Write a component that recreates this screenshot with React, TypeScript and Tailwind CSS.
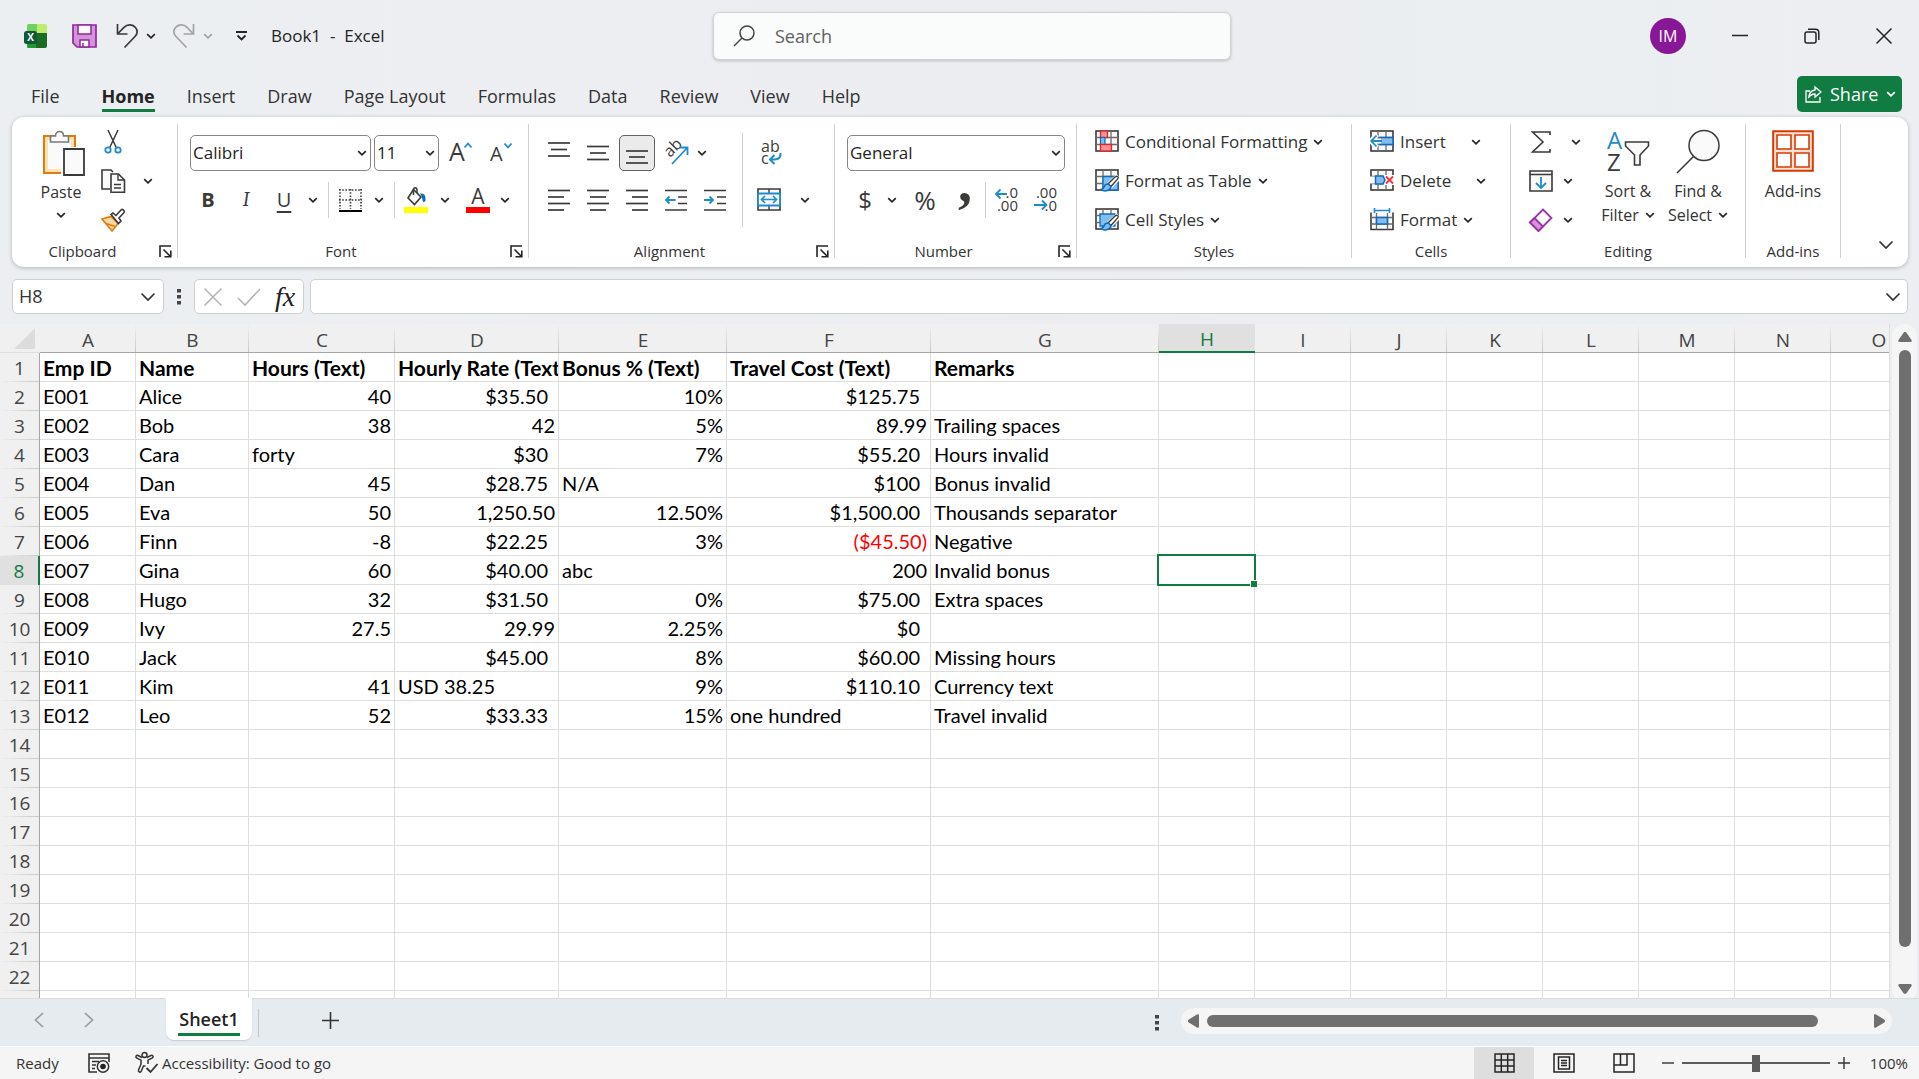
import type { ReactNode } from 'react';
import clsx from 'clsx';

const INK = '#3b3a39';
const BLUE = '#1e8bcd';

type Cell = { text: string; align?: 'right'; pad?: boolean; red?: boolean };

const columns = [
  { name: 'A', width: 96 },
  { name: 'B', width: 113 },
  { name: 'C', width: 146 },
  { name: 'D', width: 164 },
  { name: 'E', width: 168 },
  { name: 'F', width: 204 },
  { name: 'G', width: 228 },
  { name: 'H', width: 96 },
  { name: 'I', width: 96 },
  { name: 'J', width: 96 },
  { name: 'K', width: 96 },
  { name: 'L', width: 96 },
  { name: 'M', width: 96 },
  { name: 'N', width: 96 },
  { name: 'O', width: 96 },
];

const ROW_HEADER = 40;
const tableWidth = columns.reduce((sum, col) => sum + col.width, ROW_HEADER);

const l = (text: string): Cell => ({ text });
const r = (text: string): Cell => ({ text, align: 'right' });
// currency formats leave room for a closing bracket
const c = (text: string): Cell => ({ text, align: 'right', pad: true });

const data: Cell[][] = [
  ['Emp ID', 'Name', 'Hours (Text)', 'Hourly Rate (Text)', 'Bonus % (Text)', 'Travel Cost (Text)', 'Remarks'].map(l),
  [l('E001'), l('Alice'), r('40'), c('$35.50'), r('10%'), c('$125.75'), l('')],
  [l('E002'), l('Bob'), r('38'), r('42'), r('5%'), r('89.99'), l('Trailing spaces')],
  [l('E003'), l('Cara'), l('forty'), c('$30'), r('7%'), c('$55.20'), l('Hours invalid')],
  [l('E004'), l('Dan'), r('45'), c('$28.75'), l('N/A'), c('$100'), l('Bonus invalid')],
  [l('E005'), l('Eva'), r('50'), r('1,250.50'), r('12.50%'), c('$1,500.00'), l('Thousands separator')],
  [l('E006'), l('Finn'), r('-8'), c('$22.25'), r('3%'), { text: '($45.50)', align: 'right', red: true }, l('Negative')],
  [l('E007'), l('Gina'), r('60'), c('$40.00'), l('abc'), r('200'), l('Invalid bonus')],
  [l('E008'), l('Hugo'), r('32'), c('$31.50'), r('0%'), c('$75.00'), l('Extra spaces')],
  [l('E009'), l('Ivy'), r('27.5'), r('29.99'), r('2.25%'), c('$0'), l('')],
  [l('E010'), l('Jack'), l(''), c('$45.00'), r('8%'), c('$60.00'), l('Missing hours')],
  [l('E011'), l('Kim'), r('41'), l('USD 38.25'), r('9%'), c('$110.10'), l('Currency text')],
  [l('E012'), l('Leo'), r('52'), c('$33.33'), r('15%'), l('one hundred'), l('Travel invalid')],
];

const rowNumbers = Array.from({ length: 23 }, (_, i) => i + 1);
const tabs = ['File', 'Home', 'Insert', 'Draw', 'Page Layout', 'Formulas', 'Data', 'Review', 'View', 'Help'];

function Icon({ w, h, className, children }: { w: number; h: number; className?: string; children: ReactNode }) {
  return (
    <svg width={w} height={h} viewBox={`0 0 ${w} ${h}`} fill="none" className={clsx('block shrink-0 overflow-visible', className)} aria-hidden="true">
      {children}
    </svg>
  );
}

function Chevron({ color = '#242424' }: { color?: string }) {
  return (
    <Icon w={10} h={6}>
      <path d="M1.2 1.2 5 4.8 8.8 1.2" stroke={color} strokeWidth="1.7" />
    </Icon>
  );
}

function WideChevron() {
  return (
    <Icon w={16} h={10}>
      <path d="M1.5 1.5 8 8l6.5-6.5" stroke="#333" strokeWidth="1.7" />
    </Icon>
  );
}

function Tool({ label, className, children }: { label: string; className?: string; children: ReactNode }) {
  return (
    <button type="button" aria-label={label} className={clsx('flex h-9 w-9 shrink-0 items-center justify-center rounded-[5px]', className)}>
      {children}
    </button>
  );
}

function Drop({ label, className }: { label: string; className?: string }) {
  return (
    <button type="button" aria-label={label} className={clsx('flex h-9 w-[18px] shrink-0 items-center justify-center', className)}>
      <Chevron />
    </button>
  );
}

function Group({ label, width, launcher, children }: { label: string; width: string; launcher?: boolean; children: ReactNode }) {
  return (
    <section aria-label={label} className={clsx('flex shrink-0 flex-col border-r border-[#d1d1d1]', width)}>
      <div className="min-h-0 flex-1">{children}</div>
      <div className="flex h-[14px] items-end">
        <span className="flex-1 text-center text-[15px] leading-[14px] text-[#333]">{label}</span>
        {launcher && (
          <button type="button" aria-label={`${label} settings`} className="w-6 pl-1.5">
            <Icon w={13} h={13}>
              <path d="M1 12V1h11M4.5 4.5l7 7M11.8 5.5v6.3H5.5" stroke="#242424" strokeWidth="1.6" />
            </Icon>
          </button>
        )}
      </div>
    </section>
  );
}

function Divider({ className }: { className?: string }) {
  return <span className={clsx('h-9 w-px shrink-0 bg-[#d1d1d1]', className)} />;
}

function Select({ label, value, className }: { label: string; value: string; className: string }) {
  return (
    <div className={clsx('relative h-9 shrink-0', className)}>
      <select aria-label={label} className="h-full w-full appearance-none rounded-[5px] border border-[#868686] bg-white pl-0.5 text-[17px] text-[#242424]">
        <option>{value}</option>
      </select>
      <span className="pointer-events-none absolute top-[15px] right-1">
        <Chevron />
      </span>
    </div>
  );
}

// horizontal rules of a text-alignment icon, as [x1, x2, y]
function Lines({ rows }: { rows: [number, number, number][] }) {
  return (
    <Icon w={22} h={22}>
      {rows.map(([x1, x2, y]) => (
        <path key={y} d={`M${x1} ${y}H${x2}`} stroke={INK} strokeWidth="1.7" />
      ))}
    </Icon>
  );
}

function GridLines() {
  return (
    <>
      <rect x="1" y="1" width="22" height="20" fill="#fafafa" stroke={INK} strokeWidth="1.6" />
      <path d="M1 7.5h22M1 14.5h22M8 1v20M16 1v20" stroke="#6b6b6b" strokeWidth="1.3" />
    </>
  );
}

function Brush() {
  return (
    <>
      <path d="M23 6.5 14 15l-3.5 4M24 9l-9 9" stroke="#fff" strokeWidth="4" />
      <path d="M22.5 7.5c1 .8.8 1.7 0 2.6L16 17.5l-3-2.5 7-7c.9-.8 1.7-1.2 2.5-.5Z" fill="#fff" stroke={INK} strokeWidth="1.4" />
      <path d="M13 15c-2.5 0-3.5 1.2-4 3-.3 1.3-1.3 2.2-3 2.5 2.5 2 8.5 2.5 10-3Z" fill="#83bdec" stroke="#0f6cbd" strokeWidth="1.5" />
    </>
  );
}

const styleItems = [
  {
    name: 'Conditional Formatting',
    icon: (
      <>
        <GridLines />
        <rect x="5.5" y="1" width="7" height="6.5" fill="#ff8f98" stroke="#d92b2b" strokeWidth="1.4" />
        <rect x="5.5" y="7.5" width="4.5" height="7" fill="#83bdec" stroke="#0f6cbd" strokeWidth="1.2" />
        <rect x="5.5" y="14.5" width="11" height="6.5" fill="#ff8f98" stroke="#d92b2b" strokeWidth="1.4" />
      </>
    ),
  },
  {
    name: 'Format as Table',
    icon: (
      <>
        <GridLines />
        <path d="M8 7.5h15V21H8z" fill="#83bdec" stroke="#0f6cbd" strokeWidth="1.3" />
        <Brush />
      </>
    ),
  },
  {
    name: 'Cell Styles',
    icon: (
      <>
        <GridLines />
        <path d="M5 6h15v12H5z" fill="#83bdec" stroke="#0f6cbd" strokeWidth="1.3" />
        <Brush />
      </>
    ),
  },
];

const cellItems = [
  {
    name: 'Insert',
    gap: 'ml-[25px]',
    icon: (
      <>
        <GridLines />
        <path d="M10 7.5h13v7H10z" fill="#83bdec" stroke="#0f6cbd" strokeWidth="1.5" />
        <path d="M0 11h11M7 4.5 1 11l6 6.5" stroke="#fff" strokeWidth="5" />
        <path d="M1.5 11H12M6.5 5.5 1.2 11l5.3 5.5" stroke={BLUE} strokeWidth="1.8" />
      </>
    ),
  },
  {
    name: 'Delete',
    gap: 'ml-[25px]',
    icon: (
      <>
        <GridLines />
        <path d="M0 7.5h5v7H0zM14 6h10v10H14z" fill="#fff" />
        <path d="M5.5 7H13l2 4-2 4H5.5z" fill="#83bdec" stroke="#0f6cbd" strokeWidth="1.5" />
        <path d="m16 7.5 7 7m0-7-7 7" stroke="#e8373e" strokeWidth="1.9" />
      </>
    ),
  },
  {
    name: 'Format',
    gap: 'ml-1.5',
    icon: (
      <>
        <path d="M1 4.5v17h22v-17" fill="#fafafa" stroke={INK} strokeWidth="1.6" />
        <path d="M1 9.5h22M1 16h22M6.5 5v16.5M17.5 5v16.5" stroke="#6b6b6b" strokeWidth="1.3" />
        <path d="M6.5 9.5h11V16h-11z" fill="#83bdec" stroke="#0f6cbd" strokeWidth="1.6" />
        <path d="M4.5 2.5h15M4.5 0v5M19.5 0v5" stroke={BLUE} strokeWidth="1.6" />
      </>
    ),
  },
];

function TitleBar() {
  return (
    <header className="flex h-[72px] shrink-0 items-center">
      <div className="flex w-[713px] shrink-0 items-center pl-6">
        <Icon w={24} h={24}>
          <path d="M5 0h11v9H3V2c0-1.2.8-2 2-2Z" fill="#6fd160" />
          <path d="M13 0h8c1.2 0 2 .8 2 2v7H13z" fill="#bdec6e" />
          <path d="M3 9h20v13c0 1.2-.8 2-2 2H5c-1.2 0-2-.8-2-2z" fill="#1b6b22" />
          <path d="M3 9h9v15H5c-1.2 0-2-.8-2-2z" fill="#219a33" />
          <rect y="7" width="13" height="13" rx="2.5" fill="#0e5a38" />
          <text x="6.5" y="17" textAnchor="middle" fontSize="10" fontWeight="700" fill="#fff">X</text>
        </Icon>
        <button type="button" aria-label="Save" className="ml-6">
          <Icon w={25} h={24}>
            <path d="M1 1h23v22H5l-4-4z" fill="#d693dc" stroke="#8e2a9b" strokeWidth="1.7" />
            <path d="M6 1h13v9H6zM8 16h9v7H8z" fill="#fafafa" stroke="#8e2a9b" strokeWidth="1.5" />
            <path d="M11 19v4" stroke="#8e2a9b" strokeWidth="1.5" />
          </Icon>
        </button>
        <button type="button" aria-label="Undo" className="ml-[19px]">
          <Icon w={23} h={24}>
            <path d="M1.5 0v10h10M2 9.5l6-6.2C11.5-.3 17 .3 19.5 3.5c2.3 3 1.8 6.5-.5 9L8.5 23.5" stroke={INK} strokeWidth="1.7" />
          </Icon>
        </button>
        <button type="button" aria-label="Undo history" className="ml-[7px]">
          <Chevron />
        </button>
        <button type="button" aria-label="Redo" className="ml-4">
          <Icon w={23} h={24}>
            <path d="M21.5 0v10h-10M21 9.5l-6-6.2C11.5-.3 6 .3 3.5 3.5c-2.3 3-1.8 6.5.5 9l10.5 11" stroke="#a3a3a3" strokeWidth="1.7" />
          </Icon>
        </button>
        <button type="button" aria-label="Redo history" className="ml-2">
          <Chevron color="#a3a3a3" />
        </button>
        <button type="button" aria-label="Customize Quick Access Toolbar" className="ml-[23px]">
          <Icon w={11} h={11}>
            <path d="M0 1h11M1.5 4.5l4 4 4-4" stroke="#242424" strokeWidth="1.8" />
          </Icon>
        </button>
        <h1 className="ml-6 text-[17px] whitespace-pre text-[#242424]">Book1  -  Excel</h1>
      </div>
      <label className="flex h-12 w-[518px] shrink-0 items-center rounded-md border border-[#d0d2d4] bg-[#fafbfb] pl-[19px] shadow-[0_1px_3px_rgba(0,0,0,0.2)]">
        <Icon w={22} h={22}>
          <circle cx="14" cy="8" r="7" stroke="#444" strokeWidth="1.5" />
          <path d="m9 13-8 8" stroke="#444" strokeWidth="1.5" />
        </Icon>
        <input aria-label="Search" placeholder="Search" className="ml-5 w-full bg-transparent text-[18px] outline-none placeholder:text-[#616161]" />
      </label>
      <div className="ml-auto flex items-center">
        <button type="button" aria-label="Account" className="flex h-9 w-9 items-center justify-center rounded-full bg-[#881798] text-[16px] text-white">
          IM
        </button>
        <button type="button" aria-label="Minimize" className="ml-[18px] flex h-12 w-[72px] items-center justify-center">
          <Icon w={16} h={16}>
            <path d="M0 7.5h16" stroke="#242424" strokeWidth="1.5" />
          </Icon>
        </button>
        <button type="button" aria-label="Restore" className="flex h-12 w-[72px] items-center justify-center">
          <Icon w={16} h={16}>
            <rect x="1" y="4" width="11" height="11" rx="2" stroke="#242424" strokeWidth="1.5" />
            <path d="M4 1.2h7.5c2 0 3.3 1.3 3.3 3.3V12" stroke="#242424" strokeWidth="1.5" />
          </Icon>
        </button>
        <button type="button" aria-label="Close" className="flex h-12 w-[71px] items-center justify-center">
          <Icon w={16} h={16}>
            <path d="m.5.5 15 15m0-15-15 15" stroke="#242424" strokeWidth="1.5" />
          </Icon>
        </button>
      </div>
    </header>
  );
}

function TabBar() {
  return (
    <nav className="flex h-[45px] shrink-0 items-start pl-4">
      {tabs.map((tab) => (
        <button
          key={tab}
          type="button"
          className={clsx('px-[15px] pt-[11px] text-[18px] leading-[26px] text-[#333]', tab === 'File' ? 'mr-3' : 'mr-0.5')}
        >
          {tab === 'Home' ? <span className="block border-b-[3px] border-[#107c41] font-bold text-[#242424]">{tab}</span> : tab}
        </button>
      ))}
      <button type="button" className="mt-1 mr-[17px] ml-auto flex h-9 w-[105px] items-center rounded-[5px] bg-[#107c41] pl-2 text-[18px] text-white">
        <Icon w={17} h={17}>
          <path d="M5 5H1v11h14v-5M10 1l6 5-6 5V8C7 8 5 9 3.5 12 4 7 6.5 4.5 10 4z" stroke="#fff" strokeWidth="1.3" />
        </Icon>
        <span className="ml-2">Share</span>
        <span className="ml-auto pr-1.5">
          <Chevron color="#fff" />
        </span>
      </button>
    </nav>
  );
}

function Clipboard() {
  return (
    <Group label="Clipboard" width="w-[166px]" launcher>
      <div className="flex">
        <button type="button" className="ml-[19px] flex w-[60px] flex-col items-center pt-1.5 text-[16px] leading-6 text-[#333]">
          <Icon w={42} h={46} className="ml-1.5">
            <path d="M1 6h31v37H1z" fill="#fce2ae" stroke="#e07b12" strokeWidth="2" />
            <path d="M5 10h23v29H5z" fill="#fafafa" />
            <path d="M7.5 6h5c0-6 8-6 8 0h5v6h-18z" fill="#fafafa" stroke="#7a7a7a" strokeWidth="1.6" />
            <path d="M18 17h24v29H18z" fill="#fff" />
            <path d="M21 19h20v26H21z" fill="#fafafa" stroke={INK} strokeWidth="1.8" />
          </Icon>
          <span className="mt-1">Paste</span>
          <span className="mt-2">
            <Chevron />
          </span>
        </button>
        <div className="ml-1 flex flex-col gap-[3px]">
          <Tool label="Cut">
            <Icon w={18} h={24}>
              <path d="m4 0 8.5 18M14 0 5.5 18" stroke={INK} strokeWidth="1.5" />
              <circle cx="4" cy="20" r="2.7" stroke={BLUE} strokeWidth="1.8" />
              <circle cx="14" cy="20" r="2.7" stroke={BLUE} strokeWidth="1.8" />
            </Icon>
          </Tool>
          <Tool label="Copy">
            <Icon w={24} h={24}>
              <path d="M9 20H1V1h9l2 2" fill="#fafafa" stroke={INK} strokeWidth="1.6" />
              <path d="M10 5h7.5l6 6v12.2H10z" fill="#fafafa" stroke={INK} strokeWidth="1.6" />
              <path d="M17 5v6h6M13 15.5h7M13 19h7" stroke={INK} strokeWidth="1.4" />
            </Icon>
          </Tool>
          <Tool label="Format Painter">
            <Icon w={24} h={24}>
              <path d="m1 11 9-2.5 7 7L11 23C8 19 4 15 1 11Z" fill="#fcd9a0" stroke="#e07b12" strokeWidth="1.6" />
              <path d="m5 15.5 9 3" stroke="#e07b12" strokeWidth="1.6" />
              <path d="m10 6.5 2-1.5 3 2.5L20 2c1.5-1.5 4.2.8 3 2.5L18 10l2 3-2.5 2.5z" fill="#fff" stroke={INK} strokeWidth="1.6" />
            </Icon>
          </Tool>
        </div>
        <Drop label="Copy options" className="mt-[39px] ml-2" />
      </div>
    </Group>
  );
}

function FontGroup() {
  return (
    <Group label="Font" width="w-[351px]" launcher>
      <div className="flex flex-col gap-[11px] pt-[11px] pl-3 text-[20px] text-[#3b3a39]">
        <div className="flex">
          <Select label="Font name" value="Calibri" className="w-[181px]" />
          <Select label="Font size" value="11" className="ml-[3px] w-[65px]" />
          <Tool label="Increase font size" className="ml-1">
            <Icon w={24} h={24}>
              <text x="0" y="20" fontSize="25" fill={INK}>A</text>
              <path d="m15.5 6.5 3.5-4 3.5 4" stroke={BLUE} strokeWidth="1.8" />
            </Icon>
          </Tool>
          <Tool label="Decrease font size" className="ml-1">
            <Icon w={24} h={24}>
              <text x="1" y="20" fontSize="20" fill={INK}>A</text>
              <path d="m15.5 2.5 3.5 4 3.5-4" stroke={BLUE} strokeWidth="1.8" />
            </Icon>
          </Tool>
        </div>
        <div className="flex">
          <Tool label="Bold" className="font-bold">B</Tool>
          <Tool label="Italic" className="ml-0.5 font-serif italic">I</Tool>
          <Tool label="Underline" className="ml-0.5 underline underline-offset-4">U</Tool>
          <Drop label="Underline styles" className="ml-0.5" />
          <Divider className="ml-1.5" />
          <Tool label="Borders" className="ml-[3px]">
            <Icon w={23} h={23}>
              <path d="M1 0v20M22 0v20M11.5 0v20M0 1h23M0 11h23" stroke={INK} strokeWidth="1.6" strokeDasharray="1.6 1.6" />
              <path d="M0 22h23" stroke="#000" strokeWidth="2" />
            </Icon>
          </Tool>
          <Drop label="Border styles" className="ml-0.5" />
          <Divider className="ml-1.5" />
          <Tool label="Fill color" className="ml-[3px]">
            <Icon w={24} h={26}>
              <path d="M9.5 2.5 17 10l-6.5 7.5L4 11z" fill="#fafafa" stroke={INK} strokeWidth="1.6" />
              <path d="M9.5 8V3c0-3 3.5-3 3.5 0v3" stroke={INK} strokeWidth="1.5" />
              <path d="M16 6.5c4-.5 6 1.5 5.5 7-1.5 3-2.5 1.5-3-.5-.5-3-.8-4.5-2.5-6.5Z" fill="#0f6cbd" />
              <path d="M0 20h24v6H0z" fill="#ff0" />
            </Icon>
          </Tool>
          <Drop label="Fill colors" className="ml-0.5" />
          <Tool label="Font color" className="ml-1.5">
            <Icon w={24} h={26}>
              <text x="12" y="17" fontSize="21" textAnchor="middle" fill={INK}>A</text>
              <path d="M0 20h24v6H0z" fill="red" />
            </Icon>
          </Tool>
          <Drop label="Font colors" />
        </div>
      </div>
    </Group>
  );
}

function Alignment() {
  return (
    <Group label="Alignment" width="w-[306px]" launcher>
      <div className="flex">
        <div className="flex w-[213px] flex-col gap-[11px] pt-[11px] pl-3">
          <div className="flex gap-[3px]">
            <Tool label="Top align">
              <Lines rows={[[0, 22, 1], [3, 19, 7.5], [0, 22, 14]]} />
            </Tool>
            <Tool label="Middle align">
              <Lines rows={[[0, 22, 4.5], [3, 19, 11], [0, 22, 17.5]]} />
            </Tool>
            <Tool label="Bottom align" className="border border-[#616161] bg-[#ebebeb]">
              <Lines rows={[[0, 22, 9], [3, 19, 15], [0, 22, 21]]} />
            </Tool>
            <Tool label="Orientation">
              <Icon w={26} h={26}>
                <text x="0" y="0" fontSize="16" fill={INK} transform="translate(7 18) rotate(-45)">ab</text>
                <path d="M9 24 24 8M16.5 7.5h8V15" stroke={BLUE} strokeWidth="1.8" />
              </Icon>
            </Tool>
            <Drop label="Orientation options" className="-ml-1" />
          </div>
          <div className="flex gap-[3px]">
            <Tool label="Align left">
              <Lines rows={[[0, 22, 1.5], [0, 16, 8], [0, 22, 14.5], [0, 16, 21]]} />
            </Tool>
            <Tool label="Center">
              <Lines rows={[[0, 22, 1.5], [3, 19, 8], [0, 22, 14.5], [3, 19, 21]]} />
            </Tool>
            <Tool label="Align right">
              <Lines rows={[[0, 22, 1.5], [6, 22, 8], [0, 22, 14.5], [6, 22, 21]]} />
            </Tool>
            <Tool label="Decrease indent">
              <Icon w={22} h={22}>
                <path d="M0 1.5h22M13 8h9M13 14.5h9M0 21h22" stroke={INK} strokeWidth="1.7" />
                <path d="M1 11h9.5M4.5 7.5 1 11l3.5 3.5" stroke={BLUE} strokeWidth="1.8" />
              </Icon>
            </Tool>
            <Tool label="Increase indent">
              <Icon w={22} h={22}>
                <path d="M0 1.5h22M13 8h9M13 14.5h9M0 21h22" stroke={INK} strokeWidth="1.7" />
                <path d="M0 11h9M5.5 7.5 9 11l-3.5 3.5" stroke={BLUE} strokeWidth="1.8" />
              </Icon>
            </Tool>
          </div>
        </div>
        <span className="mt-[9px] h-[94px] w-px bg-[#d1d1d1]" />
        <div className="flex flex-col gap-[11px] pt-[11px] pl-2">
          <Tool label="Wrap text" className="ml-0.5">
            <Icon w={20} h={26}>
              <text x="0" y="12" fontSize="16" fill={INK}>ab</text>
              <text x="0" y="24" fontSize="16" fill={INK}>c</text>
              <path d="M19.5 13c.5 4-1.500 6.500-6 6.500h-4M13.500 15 9 19.500l4.500 4.500" stroke={BLUE} strokeWidth="2" />
            </Icon>
          </Tool>
          <div className="flex">
            <Tool label="Merge and center">
              <Icon w={24} h={24}>
                <path d="M1 1h22v21H1z" fill="#fafafa" stroke={INK} strokeWidth="1.6" />
                <path d="M12 1v21" stroke={INK} strokeWidth="1.4" />
                <path d="M1 5.5h22v12H1z" fill="#fafafa" stroke={BLUE} strokeWidth="1.8" />
                <path d="M5 11.5h14M8 8l-3.5 3.5L8 15M16 8l3.5 3.5L16 15" stroke={BLUE} strokeWidth="1.7" />
              </Icon>
            </Tool>
            <Drop label="Merge options" className="ml-[9px]" />
          </div>
        </div>
      </div>
    </Group>
  );
}

function NumberGroup() {
  return (
    <Group label="Number" width="w-[242px]" launcher>
      <div className="flex flex-col gap-[11px] pt-[11px] pl-3 text-[#3b3a39]">
        <Select label="Number format" value="General" className="w-[218px]" />
        <div className="flex">
          <Tool label="Accounting format" className="text-[24px]">$</Tool>
          <Drop label="Currencies" />
          <Tool label="Percent style" className="ml-1.5 text-[26px]">%</Tool>
          <Tool label="Comma style" className="ml-1">
            <Icon w={20} h={24}>
              <text x="3" y="13" fontSize="56" fontWeight="700" fontFamily="Liberation Serif" fill={INK}>,</text>
            </Icon>
          </Tool>
          <Divider className="ml-0.5" />
          <Tool label="Increase decimal" className="ml-0.5">
            <Icon w={23} h={26}>
              <text x="23" y="11" fontSize="15" textAnchor="end" fill={INK}>.0</text>
              <text x="23" y="24" fontSize="15" textAnchor="end" fill={INK}>.00</text>
              <path d="M1.5 7H12M5.5 2.5 1 7l4.5 4.5" stroke={BLUE} strokeWidth="1.8" />
            </Icon>
          </Tool>
          <Tool label="Decrease decimal" className="ml-[3px]">
            <Icon w={23} h={26}>
              <text x="23" y="11" fontSize="15" textAnchor="end" fill={INK}>.00</text>
              <text x="23" y="24" fontSize="15" textAnchor="end" fill={INK}>.0</text>
              <path d="M0 18h12M8 13.5l4.5 4.5L8 22.5" stroke={BLUE} strokeWidth="1.8" />
            </Icon>
          </Tool>
        </div>
      </div>
    </Group>
  );
}

function Editing() {
  return (
    <Group label="Editing" width="w-[235px]">
      <div className="flex">
        <div className="flex flex-col gap-[3px] pl-3">
          <div className="flex">
            <Tool label="AutoSum">
              <Icon w={20} h={24}>
                <path d="M19 5V2H1.5L12 12 1.5 22H19v-3" stroke={INK} strokeWidth="1.6" />
              </Icon>
            </Tool>
            <Drop label="AutoSum options" className="ml-2" />
          </div>
          <div className="flex">
            <Tool label="Fill">
              <Icon w={24} h={22}>
                <path d="M1 1h22v20H1zM1 4.5h22" fill="#fafafa" stroke={INK} strokeWidth="1.6" />
                <path d="M12 7v10.5M7 13l5 5 5-5" stroke={BLUE} strokeWidth="1.8" />
              </Icon>
            </Tool>
            <Drop label="Fill options" />
          </div>
          <div className="flex">
            <Tool label="Clear">
              <Icon w={24} h={24}>
                <path d="m1 14.5 13-13 8.5 8.5-13 13z" fill="#fafafa" stroke="#9a34a6" strokeWidth="1.8" />
                <path d="M1 14.5 5.5 10l8.5 8.5L9.5 23z" fill="#d693dc" stroke="#9a34a6" strokeWidth="1.8" />
              </Icon>
            </Tool>
            <Drop label="Clear options" />
          </div>
        </div>
        <button type="button" className="ml-[9px] flex w-[68px] flex-col items-center pt-1.5 text-[16px] leading-6 text-[#333]">
          <Icon w={42} h={44}>
            <text x="0" y="19" fontSize="24" fill={BLUE}>A</text>
            <text x="0" y="41" fontSize="24" fill={INK}>Z</text>
            <path d="M18.5 12h23v4L33 25v10h-5.5V25l-9-9z" fill="#fafafa" stroke={INK} strokeWidth="1.6" />
          </Icon>
          <span className="mt-[5px]">Sort &</span>
          <span className="flex items-center gap-1.5">
            Filter <Chevron />
          </span>
        </button>
        <button type="button" className="flex w-[72px] flex-col items-center pt-1.5 text-[16px] leading-6 text-[#333]">
          <Icon w={44} h={44}>
            <circle cx="28" cy="15.5" r="15" fill="#fafafa" stroke={INK} strokeWidth="1.5" />
            <path d="M17.5 26.5 1 43" stroke={INK} strokeWidth="1.6" />
          </Icon>
          <span className="mt-[5px]">Find &</span>
          <span className="flex items-center gap-1.5">
            Select <Chevron />
          </span>
        </button>
      </div>
    </Group>
  );
}

function Ribbon() {
  return (
    <div className="mr-[11px] ml-3 flex h-[150px] shrink-0 rounded-xl bg-white pt-[7px] pb-[9px] shadow-[0_1px_4px_rgba(0,0,0,0.25)]">
      <Clipboard />
      <FontGroup />
      <Alignment />
      <NumberGroup />
      <Group label="Styles" width="w-[275px]">
        <div className="flex flex-col gap-[3px] pl-[18px]">
          {styleItems.map((item) => (
            <button key={item.name} type="button" className="flex h-9 items-center text-[17px] text-[#333]">
              <Icon w={24} h={24}>{item.icon}</Icon>
              <span className="mr-1.5 ml-1.5">{item.name}</span>
              <Chevron />
            </button>
          ))}
        </div>
      </Group>
      <Group label="Cells" width="w-[159px]">
        <div className="flex flex-col gap-[3px] pl-[18px]">
          {cellItems.map((item) => (
            <button key={item.name} type="button" className="flex h-9 items-center text-[17px] text-[#333]">
              <Icon w={24} h={24}>{item.icon}</Icon>
              <span className="ml-1.5">{item.name}</span>
              <span className={item.gap}>
                <Chevron />
              </span>
            </button>
          ))}
        </div>
      </Group>
      <Editing />
      <Group label="Add-ins" width="w-[95px]">
        <button type="button" className="flex w-full flex-col items-center pt-1.5 text-[16px] leading-6 text-[#333]">
          <Icon w={42} h={42}>
            <path d="M1.2 1.2h39.6v39.6H1.2z" fill="#fbe3da" stroke="#d83b01" strokeWidth="2" />
            <path d="M5 5h14v14H5zM23 5h14v14H23zM5 23h14v14H5zM23 23h14v14H23z" fill="#fff" stroke="#d83b01" strokeWidth="1.6" />
          </Icon>
          <span className="mt-[7px]">Add-ins</span>
        </button>
      </Group>
      <button type="button" aria-label="Collapse ribbon" className="mt-auto mr-3.5 mb-2 ml-auto">
        <WideChevron />
      </button>
    </div>
  );
}

function Dots() {
  return (
    <Icon w={4} h={16}>
      <path d="M0 0h4v3.5H0zM0 6h4v3.5H0zM0 12h4v3.5H0z" fill="#444" />
    </Icon>
  );
}

function FormulaBar() {
  return (
    <div className="mt-3 mr-[11px] mb-2.5 ml-3 flex h-[35px] shrink-0 items-center">
      <label className="flex h-full w-[152px] items-center rounded-[5px] border border-[#d0d0d0] bg-white pr-[7px] pl-1.5">
        <input aria-label="Name box" defaultValue="H8" className="min-w-0 flex-1 text-[18px] text-[#333] outline-none" />
        <WideChevron />
      </label>
      <span className="mr-[13px] ml-[13px]">
        <Dots />
      </span>
      <div className="flex h-full w-[110px] items-center rounded-[5px] border border-[#d0d0d0] bg-white pl-2">
        <button type="button" aria-label="Cancel">
          <Icon w={20} h={20}>
            <path d="m1.5 1.5 17 17m0-17-17 17" stroke="#b5b5b5" strokeWidth="1.6" />
          </Icon>
        </button>
        <button type="button" aria-label="Enter" className="ml-3.5">
          <Icon w={24} h={18}>
            <path d="m1 10 7 7L23 1" stroke="#b5b5b5" strokeWidth="1.6" />
          </Icon>
        </button>
        <button type="button" aria-label="Insert function" className="ml-3.5 font-['Liberation_Serif'] text-[28px] leading-7 text-[#222] italic">
          fx
        </button>
      </div>
      <label className="ml-1.5 flex h-full flex-1 items-center rounded-[5px] border border-[#d0d0d0] bg-white pr-1.5">
        <input aria-label="Formula bar" className="min-w-0 flex-1 px-2 text-[18px] outline-none" />
        <WideChevron />
      </label>
    </div>
  );
}

function Sheet() {
  return (
    <div className="flex min-h-0 flex-1">
      <div className="min-w-0 flex-1 overflow-hidden border-r border-[#dedede] bg-white">
        <table className="max-w-none table-fixed border-separate border-spacing-0" style={{ width: tableWidth }}>
          <colgroup>
            <col style={{ width: ROW_HEADER }} />
            {columns.map((col) => (
              <col key={col.name} style={{ width: col.width }} />
            ))}
          </colgroup>
          <thead>
            <tr className="h-[29px] bg-[#f0f0f0] text-[19px] leading-[30px] text-[#444]">
              <th aria-label="Select all" className="border-b border-[#e0e0e0] p-0">
                <button type="button" aria-label="Select all cells" className="ml-3.5 block">
                  <Icon w={21} h={21}>
                    <path d="M21 0v21H0z" fill="#dcdcdc" />
                  </Icon>
                </button>
              </th>
              {columns.map((col) => (
                <th
                  key={col.name}
                  scope="col"
                  className={clsx(
                    'p-0 font-normal',
                    col.name === 'H'
                      ? 'border-b-2 border-[#107c41] bg-[#e0e0e0] text-[#107c41]'
                      : 'border-b border-[#a6a6a6] bg-[linear-gradient(to_bottom,#f0f0f0,#c8c8c8)] bg-[length:1px_100%] bg-right bg-no-repeat',
                  )}
                >
                  <div className="h-[27px]">{col.name}</div>
                </th>
              ))}
            </tr>
          </thead>
          <tbody>
            {rowNumbers.map((n) => (
              <tr key={n} className="h-[29px]">
                <th
                  scope="row"
                  className={clsx(
                    'p-0 text-[19px] leading-[29px] font-normal',
                    n === 8
                      ? 'border-r-2 border-[#107c41] bg-[#e0e0e0] text-[#107c41]'
                      : 'border-r border-[#a6a6a6] bg-[#f0f0f0] bg-[linear-gradient(to_right,#f0f0f0,#c8c8c8)] bg-[length:100%_1px] bg-bottom bg-no-repeat text-[#444]',
                  )}
                >
                  <div className="h-7">{n}</div>
                </th>
                {columns.map((col, i) => {
                  const cell = data[n - 1]?.[i];
                  return (
                    <td key={col.name} className="relative border-r border-b border-[#dedede] p-0">
                      <div
                        className={clsx(
                          "h-7 overflow-hidden px-[3px] font-['Lato'] leading-[29px] whitespace-nowrap",
                          n === 1 ? 'text-[21px] font-bold' : 'text-[20px]',
                          cell?.align === 'right' && 'text-right',
                          cell?.pad && 'pr-[10px]',
                          cell?.red ? 'text-[#ff0000]' : 'text-black',
                        )}
                      >
                        {cell?.text}
                      </div>
                      {n === 8 && col.name === 'H' && (
                        <div className="absolute -inset-0.5 z-10 border-2 border-[#107c41]">
                          <span className="absolute -right-[3px] -bottom-[3px] h-[7px] w-[7px] border-t border-l border-white bg-[#107c41]" />
                        </div>
                      )}
                    </td>
                  );
                })}
              </tr>
            ))}
          </tbody>
        </table>
      </div>
      <div className="mx-0.5 -mb-1 flex w-[25px] flex-col items-center rounded-full bg-[#f5f5f5] py-2">
        <Icon w={14} h={10}>
          <path d="M7 0c.8 0 1.3.5 1.8 1.2L13.5 8c.6 1 0 2-1 2h-11c-1 0-1.6-1-1-2l4.7-6.800C5.7.5 6.2 0 7 0Z" fill="#6f6f6f" />
        </Icon>
        <span className="mt-2 mb-[37px] w-3 flex-1 rounded-full bg-[#6f6f6f]" />
        <Icon w={14} h={10}>
          <path d="M7 10c-.8 0-1.3-.5-1.8-1.2L.5 2c-.6-1 0-2 1-2h11c1 0 1.6 1 1 2L8.8 8.8C8.3 9.5 7.8 10 7 10Z" fill="#6f6f6f" />
        </Icon>
      </div>
    </div>
  );
}

function SheetTabs() {
  return (
    <div className="flex h-12 shrink-0 items-start border-t border-[#d9dcde] bg-[#e6ebef]">
      <button type="button" aria-label="Previous sheet" className="mt-[13px] ml-[34px]">
        <Icon w={10} h={16}>
          <path d="M9 1 1.5 8 9 15" stroke="#9b9b9b" strokeWidth="1.7" />
        </Icon>
      </button>
      <button type="button" aria-label="Next sheet" className="mt-[13px] ml-10">
        <Icon w={10} h={16}>
          <path d="m1 1 7.5 7L1 15" stroke="#9b9b9b" strokeWidth="1.7" />
        </Icon>
      </button>
      <button type="button" className="-mt-px ml-[72px] h-[42px] w-[86px] rounded-b-lg bg-white px-3 pt-1 pb-px text-[18px] leading-7 font-semibold text-[#242424] shadow-[0_1px_1px_rgba(0,0,0,0.12)]">
        <span className="block border-b-[3px] border-[#107c41] text-center whitespace-nowrap">Sheet1</span>
      </button>
      <span className="mt-2.5 ml-1.5 h-7 w-px bg-[#c4c7ca]" />
      <button type="button" aria-label="New sheet" className="mt-[13px] ml-[63px]">
        <Icon w={17} h={17}>
          <path d="M8.5 0v17M0 8.5h17" stroke="#333" strokeWidth="1.6" />
        </Icon>
      </button>
      <span className="mt-4 ml-auto">
        <Dots />
      </span>
      <div className="mt-[9px] mr-[27px] ml-[22px] flex h-[26px] w-[711px] items-center rounded-full bg-[#f5f5f5] px-[7px]">
        <Icon w={11} h={14}>
          <path d="M0 7c0-.8.5-1.3 1.2-1.8L9 .5c1-.6 2 0 2 1v11c0 1-1 1.6-2 1L1.2 8.8C.5 8.3 0 7.8 0 7Z" fill="#6f6f6f" />
        </Icon>
        <span className="mr-14 ml-2 h-3 flex-1 rounded-full bg-[#6f6f6f]" />
        <Icon w={11} h={14}>
          <path d="M11 7c0-.8-.5-1.3-1.2-1.8L2 .5C1-.1 0 .5 0 1.5v11c0 1 1 1.6 2 1l7.8-4.7C10.5 8.3 11 7.8 11 7Z" fill="#6f6f6f" />
        </Icon>
      </div>
    </div>
  );
}

function StatusBar() {
  return (
    <footer className="flex h-[33px] shrink-0 items-center border-t border-white bg-[#f5f5f5] text-[15px] text-[#333]">
      <span className="w-[88px] pl-4">Ready</span>
      <button type="button" aria-label="Record macro">
        <Icon w={22} h={20}>
          <path d="M21 9V1H1v18h8M1 5h20M4 8.5h7M4 12h4M4 15.5h3" stroke="#333" strokeWidth="1.6" />
          <circle cx="15" cy="13.5" r="5.7" fill="#f5f5f5" stroke="#333" strokeWidth="1.5" />
          <circle cx="15" cy="13.5" r="2.8" fill="#222" />
        </Icon>
      </button>
      <button type="button" className="ml-[25px] flex items-center gap-1">
        <Icon w={23} h={22}>
          <circle cx="9.5" cy="3" r="2.5" stroke="#333" strokeWidth="1.5" />
          <path d="M7 5.5 3 3.5c-2-.8-3 1.7-1 2.7l4 2v4L3.5 18c-.6 2 2 3 2.8 1l2.2-5h2M12 5.5l4-2c2-.8 3 1.7 1 2.7l-4 2V12" stroke="#333" strokeWidth="1.5" />
          <path d="m11.5 16 4 4 7-8" stroke="#333" strokeWidth="1.8" />
        </Icon>
        Accessibility: Good to go
      </button>
      <div className="ml-auto flex h-full items-center">
        <button type="button" aria-label="Normal view" className="flex h-full w-[60px] items-center justify-center bg-[#dedede]">
          <Icon w={21} h={20}>
            <path d="M1 1h19v18H1zM1 7h19M1 13h19M7.3 1v18M13.7 1v18" stroke="#242424" strokeWidth="1.5" />
          </Icon>
        </button>
        <button type="button" aria-label="Page layout view" className="flex h-full w-[60px] items-center justify-center">
          <Icon w={22} h={20}>
            <path d="M1 1h20v18H1zM5.5 4h11v12h-11zM8 7.5h6M8 10h6M8 12.5h6" stroke="#242424" strokeWidth="1.5" />
          </Icon>
        </button>
        <button type="button" aria-label="Page break view" className="flex h-full w-[60px] items-center justify-center">
          <Icon w={22} h={20}>
            <path d="M1 1h20v18H1zM1 12h13V1M7.5 1v11" stroke="#242424" strokeWidth="1.5" />
          </Icon>
        </button>
        <button type="button" aria-label="Zoom out" className="ml-2">
          <Icon w={12} h={12}>
            <path d="M0 6h12" stroke="#333" strokeWidth="1.4" />
          </Icon>
        </button>
        <input
          type="range"
          aria-label="Zoom"
          defaultValue={50}
          className="mx-2 h-[17px] w-[148px] appearance-none bg-[linear-gradient(#5c5c5c,#5c5c5c)] bg-[length:100%_2px] bg-center bg-no-repeat [&::-webkit-slider-thumb]:h-[17px] [&::-webkit-slider-thumb]:w-2 [&::-webkit-slider-thumb]:appearance-none [&::-webkit-slider-thumb]:bg-[#5c5c5c]"
        />
        <button type="button" aria-label="Zoom in">
          <Icon w={12} h={12}>
            <path d="M0 6h12M6 0v12" stroke="#333" strokeWidth="1.4" />
          </Icon>
        </button>
        <span className="w-[69px] pr-[11px] text-right">100%</span>
      </div>
    </footer>
  );
}

export default function App() {
  return (
    <div className="flex h-screen flex-col overflow-hidden bg-[linear-gradient(90deg,#ebeff2,#edeef2_30%,#ecedf1_60%,#ebeff2_80%,#edeef1)] font-['Open_Sans',sans-serif]">
      <TitleBar />
      <TabBar />
      <Ribbon />
      <FormulaBar />
      <Sheet />
      <SheetTabs />
      <StatusBar />
    </div>
  );
}
